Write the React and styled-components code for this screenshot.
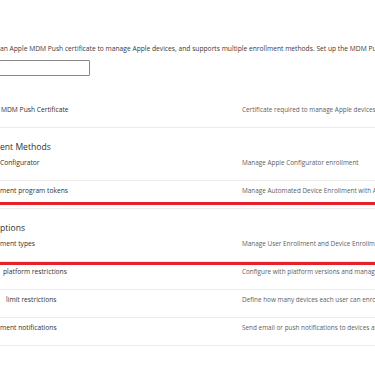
import styled, { createGlobalStyle } from 'styled-components';

const GlobalStyle = createGlobalStyle`
    html, body {
        margin: 0;
        padding: 0;
        background: #fff;
        overflow: hidden;
    }
    body {
        font-family: "Open Sans", "Liberation Sans", sans-serif;
        color: #323130;
    }
`;

const rows = {
    prereq: [
        { label: 'MDM Push Certificate', desc: 'Certificate required to manage Apple devices', indent: 1 },
    ],
    methods: [
        { label: 'Configurator', desc: 'Manage Apple Configurator enrollment', indent: 0 },
        { label: 'ment program tokens', desc: 'Manage Automated Device Enrollment with Apple Business Manager', indent: 0 },
    ],
    options: [
        { label: 'ment types', desc: 'Manage User Enrollment and Device Enrollment profiles', indent: 0 },
    ],
    restrictions: [
        { label: 'platform restrictions', desc: 'Configure with platform versions and manage personally owned devices', indent: 3 },
        { label: 'limit restrictions', desc: 'Define how many devices each user can enroll', indent: 6 },
        { label: 'ment notifications', desc: 'Send email or push notifications to devices after enrollment', indent: 0 },
    ],
};

const SettingRow = ({ row }) => (
    <Row>
        <Label $indent={row.indent}>{row.label}</Label>
        <Desc>{row.desc}</Desc>
    </Row>
);

const App = () => {
    return (
        <>
            <GlobalStyle />
            <Page>
                <Intro>
                    an Apple MDM Push certificate to manage Apple devices, and supports multiple enrollment methods. Set up the MDM Push certificate first.
                </Intro>
                <Search type="text" />
                <Section $top={24}>
                    {rows.prereq.map((r) => <SettingRow key={r.label} row={r} />)}
                </Section>
                <Section $top={14}>
                    <Heading>ent Methods</Heading>
                    {rows.methods.map((r) => <SettingRow key={r.label} row={r} />)}
                </Section>
                <Highlight>
                    <Heading>ptions</Heading>
                    {rows.options.map((r) => <SettingRow key={r.label} row={r} />)}
                </Highlight>
                <Section $top={0}>
                    {rows.restrictions.map((r) => <SettingRow key={r.label} row={r} />)}
                </Section>
            </Page>
        </>
    );
};

const Page = styled.div`
    display: flex;
    flex-direction: column;
    width: 375px;
    height: 366px;
    overflow: hidden;
    padding-top: 44px;
    box-sizing: border-box;
    & > * {
        flex-shrink: 0;
    }
`;

const Intro = styled.div`
    font-size: 6.7px;
    line-height: 10px;
    white-space: nowrap;
    color: #3b3a39;
`;

const Search = styled.input`
    display: block;
    margin: 6px 0 0 -12px;
    width: 102px;
    height: 16px;
    box-sizing: border-box;
    border: 1px solid #8a8886;
    border-radius: 1px;
    padding: 0;
    background: #fff;
    outline: none;
`;

const Section = styled.div`
    display: flex;
    flex-direction: column;
    margin-top: ${(p) => p.$top}px;
`;

const Highlight = styled.div`
    position: relative;
    z-index: 1;
    display: flex;
    flex-direction: column;
    margin: -7px 0 -3px;
    padding-top: 18px;
    border-top: 3px solid #e8202a;
    border-bottom: 3px solid #e8202a;
`;

const Heading = styled.div`
    flex-shrink: 0;
    font-size: 8.6px;
    line-height: 10px;
    height: 10px;
    margin-bottom: 1px;
    color: #323130;
    white-space: nowrap;
`;

const Row = styled.div`
    flex-shrink: 0;
    display: grid;
    grid-template-columns: 242px 1fr;
    height: 28px;
    box-sizing: border-box;
    padding-top: 5px;
    border-bottom: 1px solid #edebe9;
    background: #fff;
    white-space: nowrap;
    font-size: 6.7px;
    line-height: 10px;
`;

const Label = styled.div`
    padding-left: ${(p) => p.$indent}px;
    color: #323130;
    overflow: hidden;
`;

const Desc = styled.div`
    font-size: 6.4px;
    color: #605e5c;
    overflow: hidden;
`;

export default App;
